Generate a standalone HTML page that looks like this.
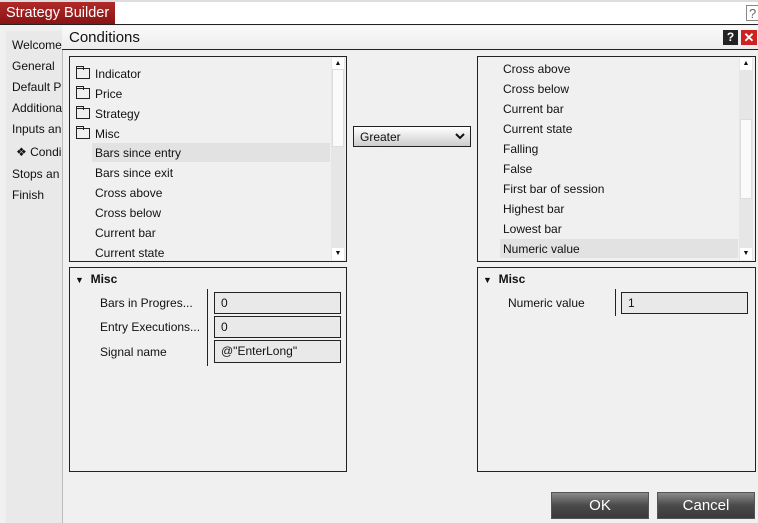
<!DOCTYPE html><html><head><style>
*{margin:0;padding:0;box-sizing:border-box}
body{width:758px;height:523px;overflow:hidden;background:#f0f0f0;font-family:"Liberation Sans",Arial,sans-serif;font-size:12px;color:#111;position:relative}
.a{position:absolute}
.it{position:absolute;white-space:nowrap}
.box{position:absolute;border:1px solid #222;background:#f0f0f0}
.fld{position:absolute;border:1px solid #222;background:#e9e9e9;padding:3px 6px;font-size:12px}
.fold{display:inline-block;width:14px;height:11px;border:1px solid #222;vertical-align:-1px;margin-right:5px;position:relative}
.fold:before{content:"";position:absolute;left:-1px;top:-3px;width:6px;height:3px;border:1px solid #222;border-bottom:none}
.btn{position:absolute;height:27px;border:1px solid #555;background:linear-gradient(#8a8a8a,#4a4a4a 50%,#3a3a3a);color:#fff;font-size:15px;text-align:center;line-height:25px}
</style></head><body>
<div class="a" style="left:0;top:0;width:758px;height:25px;background:#fff;border-bottom:1px solid #222"></div>
<div class="a" style="left:0;top:0;width:758px;height:2px;background:#ddd"></div>
<div class="a" style="left:0;top:2px;width:115px;height:22px;background:linear-gradient(#b02a2a,#8a1414);color:#fff;font-size:14.5px;padding:3px 0 0 6px">Strategy Builder</div>
<div class="a" style="left:746px;top:5px;width:14px;height:16px;border:1px solid #888;color:#666;font-size:13px;padding-left:2px">?</div>
<div class="a" style="left:6px;top:31px;width:56px;height:492px;background:#e9e9e9"></div>
<div class="it" style="left:12px;top:38px">Welcome</div>
<div class="it" style="left:12px;top:59px">General</div>
<div class="it" style="left:12px;top:80px">Default P</div>
<div class="it" style="left:12px;top:101px">Additiona</div>
<div class="it" style="left:12px;top:122px">Inputs an</div>
<div class="it" style="left:16px;top:145px">❖ Condi</div>
<div class="it" style="left:12px;top:167px">Stops an</div>
<div class="it" style="left:12px;top:188px">Finish</div>
<div class="a" style="left:62px;top:26px;width:696px;height:497px;background:#f0f0f0;border-left:1px solid #bbb"></div>
<div class="a" style="left:62px;top:26px;width:696px;height:24px;background:linear-gradient(#fafafa,#ececec);border-bottom:1px solid #222"></div>
<div class="it" style="left:69px;top:29px;font-size:15px">Conditions</div>
<div class="a" style="left:723px;top:30px;width:15px;height:15px;background:#222;color:#fff;font-weight:bold;font-size:12px;text-align:center;line-height:15px">?</div>
<div class="a" style="left:741px;top:30px;width:16px;height:15px;background:#c22;color:#fff;font-weight:bold;font-size:13px;text-align:center;line-height:15px">✕</div>

<div class="box" style="left:69px;top:56px;width:278px;height:206px;background:#f0f0f0"></div>
<div class="a" style="left:331px;top:58px;width:14px;height:202px;background:#e6e6e6"></div>
<div class="a" style="left:332px;top:58px;width:12px;height:12px;background:#fff;font-size:7px;text-align:center;line-height:12px">▲</div>
<div class="a" style="left:332px;top:69px;width:12px;height:78px;background:#fafafa;border:1px solid #ddd"></div>
<div class="a" style="left:332px;top:248px;width:12px;height:12px;background:#fff;font-size:7px;text-align:center;line-height:12px">▼</div>
<div class="a" style="left:92px;top:143px;width:238px;height:19px;background:#e2e2e2"></div>
<div class="it" style="left:76px;top:67px"><span class="fold"></span>Indicator</div>
<div class="it" style="left:76px;top:87px"><span class="fold"></span>Price</div>
<div class="it" style="left:76px;top:107px"><span class="fold"></span>Strategy</div>
<div class="it" style="left:76px;top:127px"><span class="fold"></span>Misc</div>
<div class="it" style="left:95px;top:146px">Bars since entry</div>
<div class="it" style="left:95px;top:166px">Bars since exit</div>
<div class="it" style="left:95px;top:186px">Cross above</div>
<div class="it" style="left:95px;top:206px">Cross below</div>
<div class="it" style="left:95px;top:226px">Current bar</div>
<div class="it" style="left:95px;top:246px">Current state</div>

<div class="a" style="left:353px;top:126px;width:118px;height:21px;border:1px solid #222;background:linear-gradient(#fff,#ccc);padding:3px 6px;font-size:12px">Greater<svg style="position:absolute;right:5px;top:6px" width="10" height="7" viewBox="0 0 10 7"><path d="M1 1L5 5L9 1" stroke="#111" stroke-width="2" fill="none"/></svg></div>

<div class="box" style="left:477px;top:56px;width:279px;height:206px"></div>
<div class="a" style="left:739px;top:58px;width:14px;height:202px;background:#e6e6e6"></div>
<div class="a" style="left:740px;top:58px;width:12px;height:12px;background:#fff;font-size:7px;text-align:center;line-height:12px">▲</div>
<div class="a" style="left:740px;top:119px;width:12px;height:80px;background:#fafafa;border:1px solid #ddd"></div>
<div class="a" style="left:740px;top:248px;width:12px;height:12px;background:#fff;font-size:7px;text-align:center;line-height:12px">▼</div>
<div class="a" style="left:500px;top:239px;width:238px;height:19px;background:#e2e2e2"></div>
<div class="it" style="left:503px;top:62px">Cross above</div>
<div class="it" style="left:503px;top:82px">Cross below</div>
<div class="it" style="left:503px;top:102px">Current bar</div>
<div class="it" style="left:503px;top:122px">Current state</div>
<div class="it" style="left:503px;top:142px">Falling</div>
<div class="it" style="left:503px;top:162px">False</div>
<div class="it" style="left:503px;top:182px">First bar of session</div>
<div class="it" style="left:503px;top:202px">Highest bar</div>
<div class="it" style="left:503px;top:222px">Lowest bar</div>
<div class="it" style="left:503px;top:242px">Numeric value</div>

<div class="box" style="left:69px;top:267px;width:278px;height:205px"></div>
<div class="it" style="left:75px;top:272px;font-weight:bold"><span style="font-size:9px">▼</span>&nbsp; Misc</div>
<div class="a" style="left:207px;top:289px;width:1px;height:77px;background:#222"></div>
<div class="it" style="left:100px;top:296px">Bars in Progres...</div>
<div class="it" style="left:100px;top:320px">Entry Executions...</div>
<div class="it" style="left:100px;top:345px">Signal name</div>
<div class="fld" style="left:214px;top:292px;width:127px;height:22px">0</div>
<div class="fld" style="left:214px;top:316px;width:127px;height:22px">0</div>
<div class="fld" style="left:214px;top:340px;width:127px;height:23px">@"EnterLong"</div>

<div class="box" style="left:477px;top:267px;width:279px;height:205px"></div>
<div class="it" style="left:483px;top:272px;font-weight:bold"><span style="font-size:9px">▼</span>&nbsp; Misc</div>
<div class="a" style="left:615px;top:289px;width:1px;height:27px;background:#222"></div>
<div class="it" style="left:508px;top:296px">Numeric value</div>
<div class="fld" style="left:621px;top:292px;width:127px;height:22px">1</div>

<div class="btn" style="left:551px;top:492px;width:98px">OK</div>
<div class="btn" style="left:657px;top:492px;width:98px">Cancel</div>
</body></html>
